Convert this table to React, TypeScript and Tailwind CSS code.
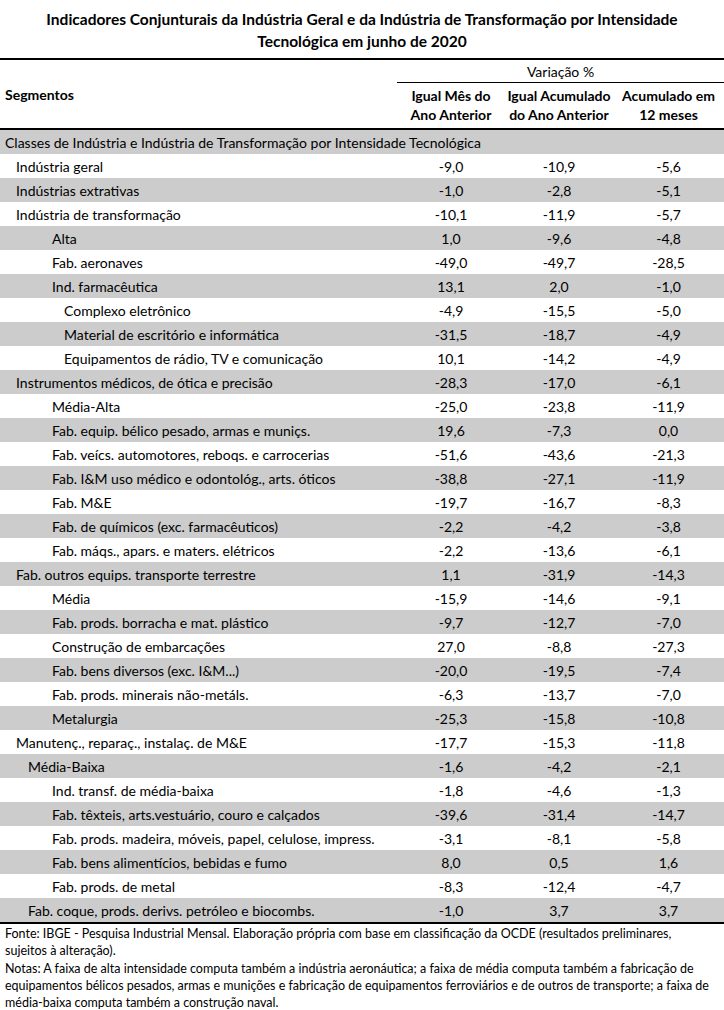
import React from "react";

/* ── Data ─────────────────────────────────────────────── */
type Row = { label: string; indent: number; v: [string, string, string] };

const rows: Row[] = [
  { label: "Indústria geral", indent: 1, v: ["-9,0", "-10,9", "-5,6"] },
  { label: "Indústrias extrativas", indent: 1, v: ["-1,0", "-2,8", "-5,1"] },
  { label: "Indústria de transformação", indent: 1, v: ["-10,1", "-11,9", "-5,7"] },
  { label: "Alta", indent: 3, v: ["1,0", "-9,6", "-4,8"] },
  { label: "Fab. aeronaves", indent: 3, v: ["-49,0", "-49,7", "-28,5"] },
  { label: "Ind. farmacêutica", indent: 3, v: ["13,1", "2,0", "-1,0"] },
  { label: "Complexo eletrônico", indent: 4, v: ["-4,9", "-15,5", "-5,0"] },
  { label: "Material de escritório e informática", indent: 4, v: ["-31,5", "-18,7", "-4,9"] },
  { label: "Equipamentos de rádio, TV e comunicação", indent: 4, v: ["10,1", "-14,2", "-4,9"] },
  { label: "Instrumentos médicos, de ótica e precisão", indent: 1, v: ["-28,3", "-17,0", "-6,1"] },
  { label: "Média-Alta", indent: 3, v: ["-25,0", "-23,8", "-11,9"] },
  { label: "Fab. equip. bélico pesado, armas e muniçs.", indent: 3, v: ["19,6", "-7,3", "0,0"] },
  { label: "Fab. veícs. automotores, reboqs. e carrocerias", indent: 3, v: ["-51,6", "-43,6", "-21,3"] },
  { label: "Fab. I&M uso médico e odontológ., arts. óticos", indent: 3, v: ["-38,8", "-27,1", "-11,9"] },
  { label: "Fab. M&E", indent: 3, v: ["-19,7", "-16,7", "-8,3"] },
  { label: "Fab. de químicos (exc. farmacêuticos)", indent: 3, v: ["-2,2", "-4,2", "-3,8"] },
  { label: "Fab. máqs., apars. e maters. elétricos", indent: 3, v: ["-2,2", "-13,6", "-6,1"] },
  { label: "Fab. outros equips. transporte terrestre", indent: 1, v: ["1,1", "-31,9", "-14,3"] },
  { label: "Média", indent: 3, v: ["-15,9", "-14,6", "-9,1"] },
  { label: "Fab. prods. borracha e mat. plástico", indent: 3, v: ["-9,7", "-12,7", "-7,0"] },
  { label: "Construção de embarcações", indent: 3, v: ["27,0", "-8,8", "-27,3"] },
  { label: "Fab. bens diversos (exc. I&M...)", indent: 3, v: ["-20,0", "-19,5", "-7,4"] },
  { label: "Fab. prods. minerais não-metáls.", indent: 3, v: ["-6,3", "-13,7", "-7,0"] },
  { label: "Metalurgia", indent: 3, v: ["-25,3", "-15,8", "-10,8"] },
  { label: "Manutenç., reparaç., instalaç. de M&E", indent: 1, v: ["-17,7", "-15,3", "-11,8"] },
  { label: "Média-Baixa", indent: 2, v: ["-1,6", "-4,2", "-2,1"] },
  { label: "Ind. transf. de média-baixa", indent: 3, v: ["-1,8", "-4,6", "-1,3"] },
  { label: "Fab. têxteis, arts.vestuário, couro e calçados", indent: 3, v: ["-39,6", "-31,4", "-14,7"] },
  { label: "Fab. prods. madeira, móveis, papel, celulose, impress.", indent: 3, v: ["-3,1", "-8,1", "-5,8"] },
  { label: "Fab. bens alimentícios, bebidas e fumo", indent: 3, v: ["8,0", "0,5", "1,6"] },
  { label: "Fab. prods. de metal", indent: 3, v: ["-8,3", "-12,4", "-4,7"] },
  { label: "Fab. coque, prods. derivs. petróleo e biocombs.", indent: 2, v: ["-1,0", "3,7", "3,7"] },
];

const indentClass: Record<number, string> = {
  1: "pl-[16px]",
  2: "pl-[28px]",
  3: "pl-[52px]",
  4: "pl-[64px]",
};

const grid = "grid grid-cols-[397px_108px_108px_111px]";

/* ── Page ─────────────────────────────────────────────── */
export default function App() {
  return (
    <div className="w-[724px] bg-white text-black font-['Lato','Open_Sans',sans-serif] text-[14px]">
      {/* Title */}
      <div className="pt-[8px] pb-[6px] text-center font-bold text-[15.5px] leading-[22px]">
        <p>Indicadores Conjunturais da Indústria Geral e da Indústria de Transformação por Intensidade</p>
        <p>Tecnológica em junho de 2020</p>
      </div>

      {/* Header */}
      <div className="border-t-2 border-b-2 border-black">
        <div className={grid}>
          <div className="row-span-2 flex items-center pl-[5px] pt-[1px] font-bold">Segmentos</div>
          <div className="col-span-3 h-[23px] border-b border-black flex items-center justify-center">
            Variação %
          </div>
          <div className="col-span-3 grid grid-cols-[108px_108px_111px] font-bold leading-[19px] text-center pt-[3px] pb-[4px]">
            <div>
              Igual Mês do
              <br />
              Ano Anterior
            </div>
            <div>
              Igual Acumulado
              <br />
              do Ano Anterior
            </div>
            <div>
              Acumulado em
              <br />
              12 meses
            </div>
          </div>
        </div>
      </div>

      {/* Body */}
      <div className="border-b-2 border-black">
        <div className="h-[24px] bg-[#cccccc] flex items-center pl-[5px]">
          Classes de Indústria e Indústria de Transformação por Intensidade Tecnológica
        </div>
        {rows.map((r, i) => (
          <div
            key={r.label}
            className={`${grid} h-[24px] items-center ${i % 2 === 1 ? "bg-[#cccccc]" : "bg-white"}`}
          >
            <div className={`${indentClass[r.indent]} whitespace-nowrap`}>{r.label}</div>
            {r.v.map((n, j) => (
              <div key={j} className="text-center">
                {n}
              </div>
            ))}
          </div>
        ))}
      </div>

      {/* Footer */}
      <div className="px-[5px] pt-[1px] text-[12.5px] leading-[17.25px] whitespace-nowrap">
        <p>
          Fonte: IBGE - Pesquisa Industrial Mensal. Elaboração própria com base em classificação da OCDE (resultados preliminares,
          <br />
          sujeitos à alteração).
        </p>
        <p>
          Notas: A faixa de alta intensidade computa também a indústria aeronáutica; a faixa de média computa também a fabricação de
          <br />
          equipamentos bélicos pesados, armas e munições e fabricação de equipamentos ferroviários e de outros de transporte; a faixa de
          <br />
          média-baixa computa também a construção naval.
        </p>
      </div>
    </div>
  );
}
